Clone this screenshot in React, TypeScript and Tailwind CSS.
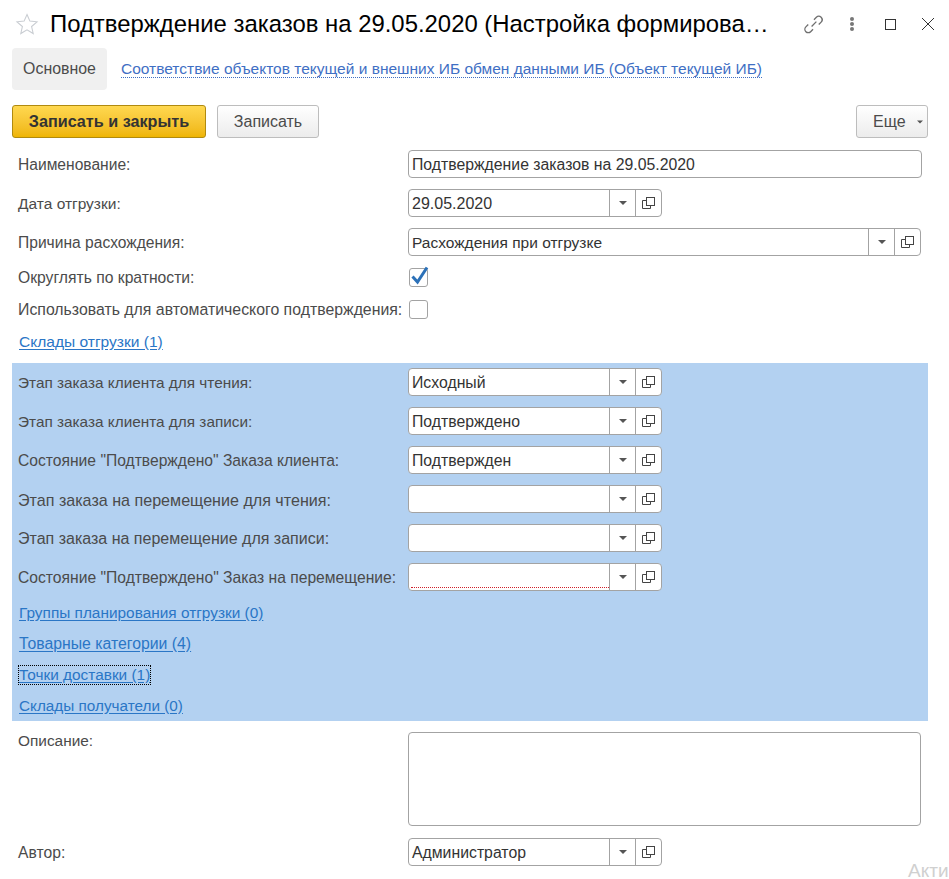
import React from "react";

const Arrow = () => <div className="w-0 h-0 border-l-[4px] border-r-[4px] border-t-[4px] border-l-transparent border-r-transparent border-t-[#555]" />;

const Open = () => (
  <svg width="14" height="14" viewBox="0 0 14 14" fill="none" stroke="#444" strokeWidth="1">
    <rect x="4.5" y="1.5" width="8" height="8" />
    <path d="M4.5 4.5H0.5V12.5H8.5V9.5" />
  </svg>
);

function Combo({ value, width, dotted, cls = "text-[15.8px]" }: { value: string; width: string; dotted?: boolean; cls?: string }) {
  return (
    <div className={`relative flex h-[28px] ${width} rounded-[4px] border border-[#a3a3a3] bg-white`}>
      <div className={`flex-1 min-w-0 pl-[3px] leading-[28px] text-[#333] ${cls}`}>{value}</div>
      <div className="flex w-[26px] items-center justify-center border-l border-[#a3a3a3]"><Arrow /></div>
      <div className="flex w-[26px] items-center justify-center border-l border-[#a3a3a3]"><Open /></div>
      {dotted && <div className="absolute left-[2px] bottom-[2px] w-[198px] border-b border-dotted border-[#d0202a]" />}
    </div>
  );
}

function Row({ label, children, cls = "text-[15.7px]", mb = "mb-[11px]" }: { label: string; children: React.ReactNode; cls?: string; mb?: string }) {
  return (
    <div className={`flex items-center h-[28px] ${mb}`}>
      <div className={`w-[396px] shrink-0 pl-[6px] pt-[2px] text-[#4b4b4b] whitespace-nowrap ${cls}`}>{label}</div>
      {children}
    </div>
  );
}

function Lnk({ text, focus, cls }: { text: string; focus?: boolean; cls: string }) {
  return (
    <div className="h-[31px] flex items-center pl-[7px]">
      <span className={`text-[#2a76c6] underline underline-offset-2 leading-[18px] ${cls} ${focus ? "outline-1 outline-dotted outline-black" : ""}`}>{text}</span>
    </div>
  );
}

export default function App() {
  return (
    <div className="relative w-[949px] h-[879px] overflow-hidden bg-white text-[16px]" style={{ fontFamily: '"Liberation Sans", Arial, sans-serif' }}>
      <div className="flex items-center h-[48px] pl-[15px]">
        <svg width="24" height="24" viewBox="0 0 24 24" fill="none" stroke="#c9cdd2" strokeWidth="1.1" className="shrink-0">
          <path d="M12 2.5l2.9 6.6 7.1.7-5.4 4.7 1.6 7-6.2-3.7-6.2 3.700 1.600-7L2 9.800l7.100-.7z" />
        </svg>
        <div className="ml-[11px] w-[725px] truncate text-[23.9px] text-black">Подтверждение заказов на 29.05.2020 (Настройка формирования заказов)</div>
        <svg width="21" height="21" viewBox="0 0 22 22" fill="none" stroke="#6f6f6f" strokeWidth="1.4" className="ml-[28px] shrink-0">
          <path d="M9 13l5-5M11.500 6l2.500-2.500a3.500 3.500 0 0 1 5 5L16.500 11M10.500 16L8 18.500a3.500 3.500 0 0 1-5-5L5.500 11" />
        </svg>
        <div className="ml-[26px] flex flex-col gap-[1px] shrink-0">
          <div className="w-[4px] h-[4px] rounded-full bg-[#777]" />
          <div className="w-[4px] h-[4px] rounded-full bg-[#777]" />
          <div className="w-[4px] h-[4px] rounded-full bg-[#777]" />
        </div>
        <div className="ml-[31px] w-[11px] h-[11px] border border-[#333] shrink-0" />
        <svg width="14" height="14" viewBox="0 0 14 14" fill="none" stroke="#333" strokeWidth="1" className="ml-[25px] shrink-0">
          <path d="M1 1l12 12M13 1L1 13" />
        </svg>
      </div>

      <div className="flex items-center h-[42px] ml-[12px]">
        <div className="flex items-center justify-center w-[95px] h-[42px] rounded-[4px] bg-[#f0f0f0] text-[#4b4b4b] text-[15.9px]">Основное</div>
        <span className="ml-[14px] text-[#3f6fc4] text-[15.5px] border-b border-dotted border-[#3f6fc4] leading-[17px]">Соответствие объектов текущей и внешних ИБ обмен данными ИБ (Объект текущей ИБ)</span>
      </div>

      <div className="flex items-center h-[33px] mt-[15px] ml-[12px] mr-[21px]">
        <div className="flex items-center justify-center w-[194px] h-[33px] rounded-[3px] border border-[#b08a10] bg-gradient-to-b from-[#ffd84f] to-[#efb500] font-bold text-[16.2px] text-[#333]">Записать и закрыть</div>
        <div className="ml-[11px] flex items-center justify-center w-[102px] h-[33px] rounded-[3px] border border-[#bdbdbd] bg-gradient-to-b from-white to-[#ececec] text-[#4b4b4b]">Записать</div>
        <div className="ml-auto flex items-center w-[72px] h-[33px] rounded-[3px] border border-[#bdbdbd] bg-gradient-to-b from-white to-[#ececec] text-[#4b4b4b]">
          <span className="ml-[16px]">Еще</span>
          <div className="ml-[10px] scale-75"><Arrow /></div>
        </div>
      </div>

      <div className="mt-[12px] pl-[12px]">
        <Row label="Наименование:" cls="text-[15.6px]">
          <div className="h-[28px] w-[514px] rounded-[4px] border border-[#a3a3a3] pl-[3px] leading-[28px] text-[15.8px] text-[#333]">Подтверждение заказов на 29.05.2020</div>
        </Row>
        <Row label="Дата отгрузки:" cls="text-[15.5px]"><Combo value="29.05.2020" width="w-[254px]" cls="text-[16px]" /></Row>
        <Row label="Причина расхождения:" cls="text-[15.6px]"><Combo value="Расхождения при отгрузке" width="w-[513px]" cls="text-[15.5px]" /></Row>
        <div className="flex items-center h-[20px] mb-[12px]">
          <div className="w-[397px] pl-[6px] pt-[1px] text-[15.7px] text-[#4b4b4b]">Округлять по кратности:</div>
          <div className="relative w-[19px] h-[19px] rounded-[3px] border border-[#a3a3a3]">
            <svg width="22" height="22" viewBox="0 0 22 22" className="absolute left-[-1px] top-[-5px]" fill="none" stroke="#2c71b8" strokeWidth="3">
              <path d="M3.500 12.500L8.500 18L18 3.500" />
            </svg>
          </div>
        </div>
        <div className="flex items-center h-[20px] mb-[7px]">
          <div className="w-[397px] pl-[6px] pt-[1px] text-[15.85px] text-[#4b4b4b] whitespace-nowrap">Использовать для автоматического подтверждения:</div>
          <div className="w-[19px] h-[19px] rounded-[3px] border border-[#a3a3a3]" />
        </div>
        <Lnk text="Склады отгрузки (1)" cls="text-[15.55px]" />
      </div>

      <div className="mt-[6px] ml-[12px] w-[916px] h-[358px] bg-[#b3d1f1] pt-[5px]">
        <Row label="Этап заказа клиента для чтения:" cls="text-[15.35px]"><Combo value="Исходный" width="w-[254px]" /></Row>
        <Row label="Этап заказа клиента для записи:" cls="text-[15.35px]"><Combo value="Подтверждено" width="w-[254px]" /></Row>
        <Row label="Состояние &quot;Подтверждено&quot; Заказа клиента:" cls="text-[15.65px]"><Combo value="Подтвержден" width="w-[254px]" /></Row>
        <Row label="Этап заказа на перемещение для чтения:" cls="text-[16.1px]"><Combo value="" width="w-[254px]" /></Row>
        <Row label="Этап заказа на перемещение для записи:" cls="text-[16px]"><Combo value="" width="w-[254px]" /></Row>
        <Row label="Состояние &quot;Подтверждено&quot; Заказ на перемещение:" cls="text-[15.67px]" mb="mb-[6px]">
          <Combo value="" width="w-[254px]" dotted />
        </Row>
        <Lnk text="Группы планирования отгрузки (0)" cls="text-[15.4px]" />
        <Lnk text="Товарные категории (4)" cls="text-[15.8px]" />
        <Lnk text="Точки доставки (1)" focus cls="text-[15.4px]" />
        <Lnk text="Склады получатели (0)" cls="text-[15.3px]" />
      </div>

      <div className="flex mt-[11px] ml-[12px]">
        <div className="w-[396px] pl-[6px] leading-[18px] text-[15.4px] text-[#4b4b4b]">Описание:</div>
        <div className="w-[513px] h-[94px] rounded-[4px] border border-[#a3a3a3]" />
      </div>
      <div className="mt-[12px] ml-[12px]">
        <Row label="Автор:" cls="text-[15.7px]"><Combo value="Администратор" width="w-[254px]" /></Row>
      </div>

      <div className="absolute left-[908px] top-[859px] text-[19px] leading-[24px] text-[#d0d0d0] whitespace-nowrap">Акти</div>
    </div>
  );
}
